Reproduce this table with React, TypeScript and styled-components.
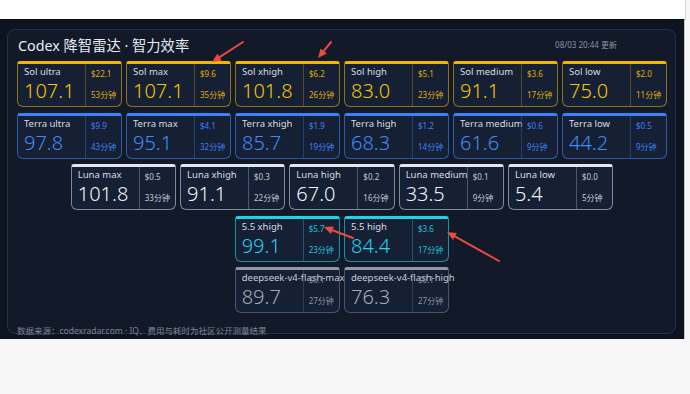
import styled, { createGlobalStyle } from "styled-components";

type Tone = "sol" | "terra" | "luna" | "cyan" | "gray";

interface ToneColors {
  top: string;
  side: string;
  score: string;
  meta: string;
  name: string;
}

const tones: Record<Tone, ToneColors> = {
  sol: { top: "#f2b705", side: "#8f7316", score: "#f7c500", meta: "#e0ad08", name: "#d9dde4" },
  terra: { top: "#3b82f6", side: "#2c5cab", score: "#3f8cf7", meta: "#3b82f6", name: "#d9dde4" },
  luna: { top: "#e4e7ec", side: "#7f8a9c", score: "#f1f3f6", meta: "#c4cad3", name: "#d9dde4" },
  cyan: { top: "#1fd1ea", side: "#1992a8", score: "#22d3ee", meta: "#1dc4dc", name: "#d9dde4" },
  gray: { top: "#8f98a6", side: "#4b5568", score: "#a3abb8", meta: "#8c95a3", name: "#c9ced6" },
};

interface Model {
  name: string;
  score: string;
  price: string;
  time: string;
}

const rows: { tone: Tone; items: Model[] }[] = [
  {
    tone: "sol",
    items: [
      { name: "Sol ultra", score: "107.1", price: "$22.1", time: "53分钟" },
      { name: "Sol max", score: "107.1", price: "$9.6", time: "35分钟" },
      { name: "Sol xhigh", score: "101.8", price: "$6.2", time: "26分钟" },
      { name: "Sol high", score: "83.0", price: "$5.1", time: "23分钟" },
      { name: "Sol medium", score: "91.1", price: "$3.6", time: "17分钟" },
      { name: "Sol low", score: "75.0", price: "$2.0", time: "11分钟" },
    ],
  },
  {
    tone: "terra",
    items: [
      { name: "Terra ultra", score: "97.8", price: "$9.9", time: "43分钟" },
      { name: "Terra max", score: "95.1", price: "$4.1", time: "32分钟" },
      { name: "Terra xhigh", score: "85.7", price: "$1.9", time: "19分钟" },
      { name: "Terra high", score: "68.3", price: "$1.2", time: "14分钟" },
      { name: "Terra medium", score: "61.6", price: "$0.6", time: "9分钟" },
      { name: "Terra low", score: "44.2", price: "$0.5", time: "9分钟" },
    ],
  },
  {
    tone: "luna",
    items: [
      { name: "Luna max", score: "101.8", price: "$0.5", time: "33分钟" },
      { name: "Luna xhigh", score: "91.1", price: "$0.3", time: "22分钟" },
      { name: "Luna high", score: "67.0", price: "$0.2", time: "16分钟" },
      { name: "Luna medium", score: "33.5", price: "$0.1", time: "9分钟" },
      { name: "Luna low", score: "5.4", price: "$0.0", time: "5分钟" },
    ],
  },
  {
    tone: "cyan",
    items: [
      { name: "5.5 xhigh", score: "99.1", price: "$5.7", time: "23分钟" },
      { name: "5.5 high", score: "84.4", price: "$3.6", time: "17分钟" },
    ],
  },
  {
    tone: "gray",
    items: [
      { name: "deepseek-v4-flash-max", score: "89.7", price: "$0.1", time: "27分钟" },
      { name: "deepseek-v4-flash-high", score: "76.3", price: "$0.1", time: "27分钟" },
    ],
  },
];

// annotation arrows drawn over the screenshot: [tailX, tailY, headX, headY]
const arrows: [number, number, number, number][] = [
  [243, 42, 212, 62],
  [331, 42, 318, 58],
  [353, 238, 324, 227],
  [499, 261, 447, 232],
];

const GlobalStyle = createGlobalStyle`
  body {
    margin: 0;
    background: #f7f7f7;
    font-family: "Noto Sans", "Open Sans", "Noto Sans CJK SC", sans-serif;
  }
`;

const Page = styled.div`
  position: relative;
  width: 690px;
  height: 394px;
  overflow: hidden;
`;

const TopStrip = styled.div`
  height: 19px;
  width: 685px;
  background: #ffffff;
  border-right: 1px solid #d4d6da;
`;

const Band = styled.div`
  width: 685px;
  height: 320px;
  box-sizing: border-box;
  padding: 9px 0 0 7px;
  background: #0d1420;
  border-top: 1px solid #070b12;
  border-right: 1px solid #c4c7cc;
`;

const Panel = styled.div`
  width: 669px;
  height: 305px;
  box-sizing: border-box;
  padding: 4px 8px 0 9px;
  border: 1px solid #263149;
  border-radius: 8px;
  background: #121a2a;
  display: flex;
  flex-direction: column;
`;

const Header = styled.div`
  display: flex;
  align-items: center;
  justify-content: space-between;
  height: 20px;
  margin-bottom: 7px;
`;

const Title = styled.h1`
  margin: 0 0 0 1px;
  font-size: 14.3px;
  font-weight: 400;
  color: #e8ebf0;
`;

const Updated = styled.span`
  margin-right: 50px;
  font-size: 8px;
  color: #8a92a0;
`;

const Rows = styled.div`
  display: flex;
  flex-direction: column;
  gap: 5.5px;
`;

const Row = styled.div`
  display: flex;
  justify-content: center;
  gap: 4px;
`;

const Card = styled.div<{ $tone: Tone }>`
  width: 105.3px;
  height: 46px;
  box-sizing: border-box;
  display: grid;
  grid-template-columns: 67px 1fr;
  background: #152035;
  border: 1px solid ${(p) => tones[p.$tone].side};
  border-top: 3px solid ${(p) => tones[p.$tone].top};
  border-radius: 3px 3px 6px 6px;
`;

const Main = styled.div`
  padding: 0 0 0 6px;
  display: flex;
  flex-direction: column;
  min-width: 0;
`;

const Name = styled.div<{ $tone: Tone }>`
  font-size: 9.5px;
  line-height: 11px;
  margin-top: 2px;
  white-space: nowrap;
  color: ${(p) => tones[p.$tone].name};
`;

const Score = styled.div<{ $tone: Tone }>`
  margin-top: 3px;
  font-size: 20px;
  line-height: 21px;
  font-weight: 300;
  color: ${(p) => tones[p.$tone].score};
`;

const Side = styled.div<{ $tone: Tone }>`
  border-left: 1px solid ${(p) => tones[p.$tone].side}88;
  padding: 5px 0 7px 5px;
  display: flex;
  flex-direction: column;
  justify-content: space-between;
  font-size: 8px;
  line-height: 9px;
  color: ${(p) => tones[p.$tone].meta};
`;

const Footer = styled.div`
  margin-top: 11px;
  font-size: 8.5px;
  color: #7b8494;
  white-space: nowrap;
`;

const Overlay = styled.svg`
  position: absolute;
  left: 0;
  top: 0;
  pointer-events: none;
`;

const ModelCard = ({ tone, m }: { tone: Tone; m: Model }) => (
  <Card $tone={tone}>
    <Main>
      <Name $tone={tone}>{m.name}</Name>
      <Score $tone={tone}>{m.score}</Score>
    </Main>
    <Side $tone={tone}>
      <span>{m.price}</span>
      <span>{m.time}</span>
    </Side>
  </Card>
);

const Arrow = ({ a }: { a: [number, number, number, number] }) => {
  const [x1, y1, x2, y2] = a;
  const len = Math.hypot(x2 - x1, y2 - y1);
  const ux = (x2 - x1) / len;
  const uy = (y2 - y1) / len;
  const hl = 9;
  const hw = 4;
  const bx = x2 - ux * hl;
  const by = y2 - uy * hl;
  const head = `${x2},${y2} ${bx - uy * hw},${by + ux * hw} ${bx + uy * hw},${by - ux * hw}`;
  return (
    <g>
      <line x1={x1} y1={y1} x2={bx} y2={by} stroke="#ea4a3f" strokeWidth={2} strokeLinecap="round" />
      <polygon points={head} fill="#ea4a3f" />
    </g>
  );
};

export default function App() {
  return (
    <>
      <GlobalStyle />
      <Page>
        <TopStrip />
        <Band>
          <Panel>
            <Header>
              <Title>Codex 降智雷达 · 智力效率</Title>
              <Updated>08/03 20:44 更新</Updated>
            </Header>
            <Rows>
              {rows.map((r) => (
                <Row key={r.tone}>
                  {r.items.map((m) => (
                    <ModelCard key={m.name} tone={r.tone} m={m} />
                  ))}
                </Row>
              ))}
            </Rows>
            <Footer>数据来源：codexradar.com · IQ、费用与耗时为社区公开测量结果</Footer>
          </Panel>
        </Band>
        <Overlay width={690} height={394}>
          {arrows.map((a, i) => (
            <Arrow key={i} a={a} />
          ))}
        </Overlay>
      </Page>
    </>
  );
}
